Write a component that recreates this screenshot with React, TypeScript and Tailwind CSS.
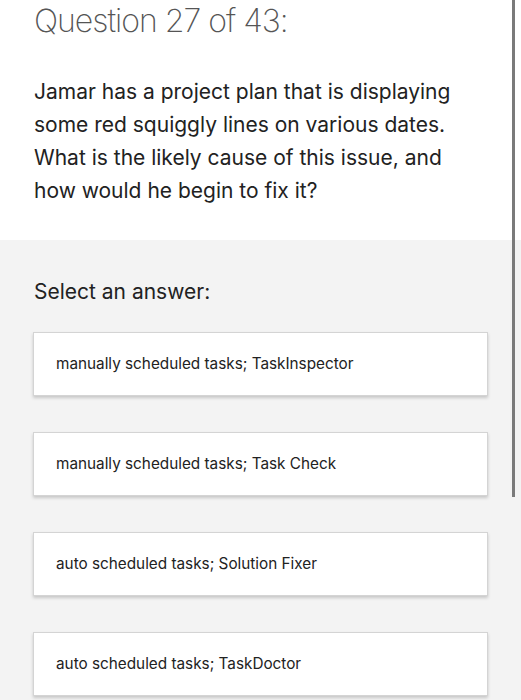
const answers = [
  'manually scheduled tasks; TaskInspector',
  'manually scheduled tasks; Task Check',
  'auto scheduled tasks; Solution Fixer',
  'auto scheduled tasks; TaskDoctor',
];

export default function App() {
  return (
    <div className="relative h-[700px] w-[521px] overflow-hidden bg-[#f3f3f3] font-['Inter',sans-serif]">
      <div className="h-[240px] bg-white px-[34px] pt-[1px]">
        <h1 className="text-[32px] leading-[40px] font-extralight tracking-[-1px] text-[#555]">Question 27 of 43:</h1>
        <p className="mt-[34px] w-[440px] text-[21px] leading-[33px] text-[#222]">
          Jamar has a project plan that is displaying some red squiggly lines on various dates. What is the likely cause of
          this issue, and how would he begin to fix it?
        </p>
      </div>
      <div className="px-[33px] pt-[37px]">
        <h2 className="pl-[1px] text-[21px] leading-[30px] text-[#222]">Select an answer:</h2>
        <div className="mt-[25px] flex w-[455px] flex-col gap-[36px]">
          {answers.map((a) => (
            <div
              key={a}
              className="flex h-[64px] items-center border border-[#d4d4d4] bg-white px-[22px] text-[15.3px] text-[#222] shadow-[0_2px_3px_rgba(0,0,0,0.18)]"
            >
              {a}
            </div>
          ))}
        </div>
      </div>
      <div className="absolute top-0 right-[6px] h-[497px] w-[3px] bg-[#7a7a7a]" />
    </div>
  );
}
